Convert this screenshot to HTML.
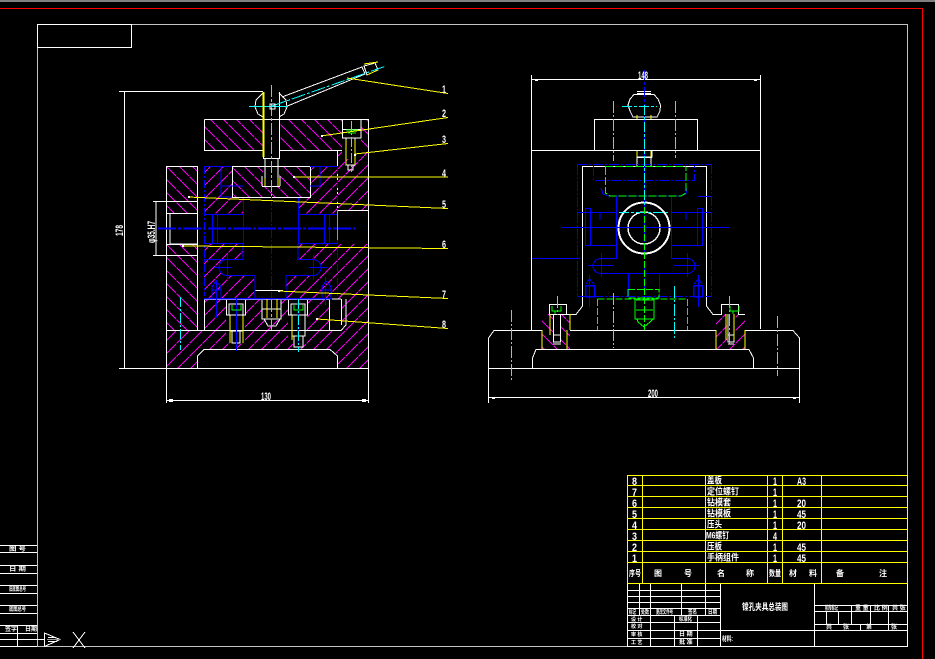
<!DOCTYPE html>
<html><head><meta charset="utf-8"><style>
html,body{margin:0;padding:0;background:#000;width:935px;height:659px;overflow:hidden}
svg{display:block}
text{fill:#fff;font-family:"Liberation Sans","Noto Sans CJK SC",sans-serif;font-size:11px;font-weight:700}
</style></head><body>
<svg width="935" height="659" viewBox="0 0 935 659" xmlns="http://www.w3.org/2000/svg">
<defs>
<pattern id="a" width="13" height="13" patternUnits="userSpaceOnUse"><path d="M-3-3L16 16" stroke="#f0f" stroke-width="1" stroke-dasharray="14 1" fill="none"/></pattern>
<pattern id="b" width="13" height="13" patternUnits="userSpaceOnUse"><path d="M-3 16L16-3" stroke="#f0f" stroke-width="1" stroke-dasharray="14 1" fill="none"/></pattern>
</defs>
<rect width="935" height="659" fill="#000"/>
<rect x="0" y="0" width="935" height="2" fill="#808080"/>
<g fill="none" shape-rendering="crispEdges">
<path d="M0 8.5H922.5V659" stroke="#f00" stroke-width="1.4"/>
<path d="M131 24.5H907.5V646.5H37.5V47" stroke="#c4c4c4"/>
<rect x="37.5" y="24.5" width="94" height="23" stroke="#fff"/>
<path d="M0 545.5H37M0 552.5H37M0 565.5H37M0 573.5H37M0 585.5H37M0 593.5H37M0 605.5H37M0 613.5H37M0 625.5H37M0 633.5H37M0 639.5H44M0 646.5H37M17.5 625V646" stroke="#fff"/>

<!-- LEFT VIEW hatches -->
<g stroke="none">
<path fill="url(#a)" d="M204 119H263V150H204Z"/>
<path fill="url(#a)" d="M279 119H368V150H279Z"/>
<path fill="url(#b)" d="M337 150H368V210H337Z"/>
<path fill="url(#a)" d="M232 166H310V197H232Z"/>
<path fill="url(#a)" d="M166 166H197V213H166Z"/>
<path fill="url(#b)" d="M204 166H232V197H243V214H204Z"/>
<path fill="url(#b)" d="M310 166H337V214H298V198L310 193Z"/>
<path fill="url(#a)" d="M166 244H197V330H166Z"/>
<path fill="url(#b)" d="M204 244H243V259H227A8 8 0 0 0 227 275H255V299H204Z"/>
<path fill="url(#b)" d="M298 244H368V330H341V299H286V275H313A8 8 0 0 0 313 259H298Z"/>
<path fill="url(#b)" d="M204 299H329V330H204Z"/>
<path fill="url(#b)" d="M166 330H368V368H337V355L330 349H204L197 355V368H166Z"/>
<path fill="url(#a)" d="M542 314H570V349H542Z"/>
<path fill="url(#b)" d="M716 314H745V349H716Z"/>
</g>
<rect x="263" y="92" width="16" height="66" fill="#000"/>
<rect x="226" y="299" width="19" height="44" fill="#000"/>
<rect x="288" y="299" width="19" height="44" fill="#000"/>
<rect x="262" y="299" width="19" height="21" fill="#000"/>
<rect x="342" y="119" width="19" height="40" fill="#000"/>
<rect x="263" y="158" width="16" height="28" fill="#000"/>
<rect x="553" y="314" width="8" height="30" fill="#000"/>
<rect x="727" y="314" width="8" height="30" fill="#000"/>

<!-- LEFT VIEW white -->
<g stroke="#fff">
<path d="M119 91.5H263M124.5 91V368M119 368.5H369M166.5 368V403M368.5 210V403M166 400.5H368"/>
<path d="M204.5 119.5H368.5V210M204.5 119.5V150.5H263M279 150.5H342M337.5 150V210M337 210.5H368"/>
<path d="M232.5 166.5H310.5V197.5H232.5ZM166.5 166.5H197.5V213.5H166.5ZM166.5 166V368M197.5 166V330M170 213V244H197M153 201.5H197M153 255.5H197M156 202V255"/>
<path d="M197 244.5H166M204 299.5H329.5V330.5M204.5 299V330M166 330.5H341L346 325V299M341.5 299V325M341 299H331"/>
<path d="M197.5 368V356L204 349.5H330L337.5 356V368"/>
<path d="M263.5 92V158.5H279.5V92M263 158.5H279M265 158V186M278 158V186M262 186.5H280M262 176V186M280 176V186"/>
<path d="M263 93L256 100L255 107L258 114L263 117M279 93L286 100L287 107L284 114L279 117"/>
<path d="M282 97L362 67L365 74L285 107M364 66L375 63L378 70L367 75Z"/>
<path d="M342.5 119.5V129.5H361V119.5M342.5 129V138H361V129M346 138V165H355V138M348 165V170H353V165"/>
<path d="M226.5 299.5V315H245.5V299.5H226.5M229 304H243V315H229ZM230 315V331H243V315M232 331V343H240V331"/>
<path d="M288.5 299.5V315H307.5V299.5H288.5M291 304H305V315H291ZM292 315V336H305V315M294 336V347H303V336"/>
<path d="M262 299V319H281V299M264 319L268 326H276L280 319M262 309H281"/>
<path d="M255 290.5H283"/>
</g>
<g stroke="#00f">
<path d="M158 228.5H356" stroke-dasharray="18 2 3 2" stroke-width="2"/>
<path d="M204.5 166V296" stroke-dasharray="8 2 2 2"/>
<path d="M337.5 166V296" stroke-dasharray="8 2 2 2"/>
<path d="M204 166.5H232M310 166.5H337M221 167V186H243M221 186V197H232M310 186H320V167M243.5 198V244M298.5 198V244"/>
<path d="M204 214.5H243M298 214.5H337M204 243.5H243M298 243.5H337M212.5 214V244M217.5 214V244M324.5 214V244M329.5 214V244"/>
<path d="M204 259.5H243V244M298 244V259.5H313A8 8 0 0 1 313 275.5H286V299M227 259.5A8 8 0 0 0 227 275.5H255V299M214 267.5H232M309 267.5H327M227.5 255V280M313.5 255V280"/>
<path d="M212 285V299M221 285V299M212 287L216 281L221 287M211 290H222M322 285V299M331 285V299M322 287L326 281L331 287M321 290H332M216.5 280V318M325.5 277V305"/>
<path d="M204 298.5H332" stroke-width="1.5"/>
<path d="M236.5 299V351M298 299V345"/>
<path d="M271.5 196V299" stroke-dasharray="10 2 2 2"/>
</g>
<g stroke="#0ff">
<path d="M271.5 85V196M271.5 300V330" stroke-dasharray="12 2 3 2"/>
<path d="M249 106.5H287"/>
<path d="M272 106L386 66" stroke-dasharray="14 2 3 2"/>
<path d="M180.5 297V350M298.5 299V352" stroke-dasharray="10 2 2 2"/>
<path d="M351.5 121V172" stroke-dasharray="10 2 2 2"/>
</g>
<rect x="270" y="104" width="5" height="5" stroke="#fff"/>
<g stroke="#0f0"><path d="M346 130H358M348 133H356M232 305V310H241V305M294 305V310H303V305M337.5 210V240" stroke-width="1"/></g>
<g stroke="#ff0">
<path d="M263.5 92V157" stroke-width="2"/>
<path d="M364 64L378 62M367 75L378 70"/>
<path d="M347 78L448 93.5M321 136L448 117.5M355 154L448 143.5M294 177H448M188 197L448 208.5M182 246L448 248.5M278 291L448 298.5M317 319L448 328.5"/>
<path d="M346 140V165M355 140V165M230 316V343M243 316V343M292 316V340M267 299V318M277 299V318"/>
<path d="M265 178V186M278 178V186"/>
</g>

<!-- RIGHT VIEW white -->
<g stroke="#fff">
<path d="M531.5 75V330M760.5 75V329M531 79.5H761M531 150.5H761"/>
<rect x="594.5" y="119.5" width="103" height="31"/>
<path d="M634 94.5L630 99L628 105L630 111L633 117H657L660 111L660.5 105L658 99L654 94.5ZM637 93.5H651M637 91.5H651"/>
<path d="M637 150V157H652V150M637 157.5H652M637 157V166M651 157V166"/>
<path d="M582.5 166.5H706.5V306L713 314.5H721.5V304.5H738.5V314.5H745M582.5 166V306L576 314.5H566M549.5 304.5H566.5V314.5H549.5Z"/>
<path d="M488.5 403V338L494 330.5H542M745 330.5H793L799.5 338V403M570 330.5H716"/>
<path d="M488 368.5H800M532.5 368V358L536 349.5H749L753.5 358V368M488 397.5H800"/>
<path d="M553.5 314V342H560.5V314M728 314V342H734V314M553 335H561M553 344H561M728 335H734M728 344H734"/>
<circle cx="644" cy="228" r="26"/><circle cx="644" cy="228" r="25"/><circle cx="644" cy="228" r="16" stroke-width="1.4"/>
</g>
<g stroke="#00f">
<path d="M577.5 165V297M711.5 164V297M577 164.5H711M577 296.5H711" stroke-dasharray="10 2 2 2"/>
<path d="M593.5 166V180.5H694.5V166" stroke-dasharray="10 2 2 2"/>
<path d="M601 188L603 194L608 196H680L686 194L687 188"/>
<path d="M616.5 196V258.5H601M671.5 196V258.5H687M577 212.5H616M672 212.5H711M600 212V220M686 212V220"/>
<rect x="585.5" y="208.5" width="5" height="37"/>
<rect x="697.5" y="208.5" width="5" height="37"/>
<path d="M591 245.5H616M672 245.5H697"/>
<path d="M561 227.5H729"/>
<path d="M532 258.5H580M698 196.5H711"/>
<path d="M601 258.5A8 7.5 0 0 0 601 273.5H687A8 7.5 0 0 0 687 258.5M628.5 273V297M659.5 273V297M588 265.5H614M601.5 253V277M674 265.5H700M687.5 253V277"/>
<rect x="585.5" y="285.5" width="9" height="11" stroke-width="1.5"/>
<rect x="693.5" y="285.5" width="9" height="11" stroke-width="1.5"/>
<path d="M586 284L589.5 279L594 284M694 284L698.5 279L702 284M589.5 275V307M698.5 275V307"/>
</g>
<path d="M644.5 70V118M644.5 118V164M644.5 164V294" stroke="#00f" stroke-dasharray="10 2 3 2" stroke-width="1"/>
<g stroke="#0ff">
<path d="M622 106.5H657M644.5 105V207M619 212.5H669" stroke-dasharray="10 2 3 2"/>
<path d="M613.5 101V161M675.5 101V158M613.5 293V348M674.5 286V340M511.5 310V382M777.5 316V376M557.5 296V315M729.5 296V345" stroke-dasharray="12 2 2 2"/>
</g>
<g stroke="#0f0">
<path d="M605.5 167V193L610 196H681L686 193V167M605 166.5H686" stroke-dasharray="8 2"/>
<path d="M644.5 207V330" stroke-dasharray="7 2" stroke-width="1"/>
<path d="M628 289.5H659V298H628ZM597.5 299H687.5V330M597.5 299V330" stroke-dasharray="7 2"/>
<path d="M635 298V319H654V298M637 319L638 322L644 327L650 322L653 319M636 310H653M636 300H654"/>
<path d="M552 306V311H561V306M730 306V311H739V306M555 311V314M733 311V314"/>
</g>
<g stroke="#ff0">
<path d="M637 115V119M651 115V119M637 151V157M651 151V157M542 330V349M570 314V330M567 330V349M716 330V349M745 330V349M734 314V340M726 314V340M550 314V335"/>
</g>

<!-- dimension end blobs -->
<g fill="#fff" stroke="none">
<rect x="169" y="399" width="4" height="3"/><rect x="362" y="399" width="4" height="3"/>
<rect x="535" y="80" width="3" height="1"/><rect x="754" y="80" width="3" height="1"/>
<rect x="492" y="398" width="3" height="1"/><rect x="793" y="398" width="3" height="1"/>
<rect x="321" y="135" width="2" height="2"/><rect x="293" y="176" width="2" height="2"/><rect x="188" y="196" width="2" height="2"/><rect x="182" y="245" width="2" height="2"/><rect x="278" y="290" width="2" height="2"/><rect x="316" y="318" width="2" height="2"/><rect x="354" y="154" width="2" height="2"/>
</g>

<!-- TITLE TABLE -->
<path stroke="#ff0" d="M627 475.5H907M627 485.5H907M627 496.5H907M627 507.5H907M627 518.5H907M627 529.5H907M627 540.5H907M627 551.5H907M627 562.5H907M627 583.5H907M627.5 475V584M642.5 475V584M705.5 475V584M767.5 475V584M782.5 475V584M821.5 475V584M907.5 475V584"/>
<g stroke="#fff">
<path d="M627.5 584V646M907.5 584V646M627 646.5H908M639.5 584V615M650.5 584V646M681.5 584V615M705.5 584V615M720.5 584V646M814.5 584V646M627 590.5H720M627 596.5H720M627 602.5H720M627 608.5H720M627 615.5H720M627 622.5H720M627 630.5H907M627 638.5H720M674.5 615V646M697.5 615V646M814 605.5H907M814 611.5H907M814 624.5H907M851.5 605V624M870.5 605V624M888.5 605V630M826.5 611V624M838.5 611V624M860.5 624V630"/>
</g>
<path d="M44.5 633V646.5L60 639.5ZM48 637.5H56M48 641.5H57" stroke="#fff"/>
<path d="M47 639.5H60" stroke="#999"/>
<path d="M73 632L85 648M85 632L73 648" stroke="#fff"/>
</g>

<!-- Dimension text -->
<text x="261" y="400" textLength="10" lengthAdjust="spacingAndGlyphs">130</text>
<text transform="translate(123,236) rotate(-90)" textLength="11" lengthAdjust="spacingAndGlyphs">178</text>
<text transform="translate(155,243) rotate(-90)" textLength="22" lengthAdjust="spacingAndGlyphs">φ35.H7</text>
<text x="638" y="79" textLength="10" lengthAdjust="spacingAndGlyphs">148</text>
<text x="648" y="397" textLength="10" lengthAdjust="spacingAndGlyphs">200</text>
<text x="442" y="93" textLength="4" lengthAdjust="spacingAndGlyphs">1</text>
<text x="442" y="117" textLength="4" lengthAdjust="spacingAndGlyphs">2</text>
<text x="442" y="143" textLength="4" lengthAdjust="spacingAndGlyphs">3</text>
<text x="442" y="177" textLength="4" lengthAdjust="spacingAndGlyphs">4</text>
<text x="442" y="208" textLength="4" lengthAdjust="spacingAndGlyphs">5</text>
<text x="442" y="248" textLength="4" lengthAdjust="spacingAndGlyphs">6</text>
<text x="442" y="298" textLength="4" lengthAdjust="spacingAndGlyphs">7</text>
<text x="442" y="328" textLength="4" lengthAdjust="spacingAndGlyphs">8</text>

<!-- Table text -->
<text x="632" y="485" textLength="5" lengthAdjust="spacingAndGlyphs">8</text>
<text x="632" y="496" textLength="5" lengthAdjust="spacingAndGlyphs">7</text>
<text x="632" y="507" textLength="5" lengthAdjust="spacingAndGlyphs">6</text>
<text x="632" y="518" textLength="5" lengthAdjust="spacingAndGlyphs">5</text>
<text x="632" y="529" textLength="5" lengthAdjust="spacingAndGlyphs">4</text>
<text x="632" y="540" textLength="5" lengthAdjust="spacingAndGlyphs">3</text>
<text x="632" y="551" textLength="5" lengthAdjust="spacingAndGlyphs">2</text>
<text x="632" y="562" textLength="5" lengthAdjust="spacingAndGlyphs">1</text>
<text x="773" y="485" textLength="4" lengthAdjust="spacingAndGlyphs">1</text>
<text x="773" y="496" textLength="4" lengthAdjust="spacingAndGlyphs">1</text>
<text x="773" y="507" textLength="4" lengthAdjust="spacingAndGlyphs">1</text>
<text x="773" y="518" textLength="4" lengthAdjust="spacingAndGlyphs">1</text>
<text x="773" y="529" textLength="4" lengthAdjust="spacingAndGlyphs">1</text>
<text x="773" y="540" textLength="4" lengthAdjust="spacingAndGlyphs">4</text>
<text x="773" y="551" textLength="4" lengthAdjust="spacingAndGlyphs">1</text>
<text x="773" y="562" textLength="4" lengthAdjust="spacingAndGlyphs">1</text>
<text x="797" y="485" textLength="9" lengthAdjust="spacingAndGlyphs">A3</text>
<text x="797" y="507" textLength="9" lengthAdjust="spacingAndGlyphs">20</text>
<text x="797" y="518" textLength="9" lengthAdjust="spacingAndGlyphs">45</text>
<text x="797" y="529" textLength="9" lengthAdjust="spacingAndGlyphs">20</text>
<text x="797" y="551" textLength="9" lengthAdjust="spacingAndGlyphs">45</text>
<text x="797" y="562" textLength="9" lengthAdjust="spacingAndGlyphs">45</text>
<g style="font-size:9px">
<text style="font-size:9px" x="707" y="483.5" textLength="15" lengthAdjust="spacingAndGlyphs">盖板</text>
<text style="font-size:9px" x="707" y="494.5" textLength="32" lengthAdjust="spacingAndGlyphs">定位螺钉</text>
<text style="font-size:9px" x="707" y="505.5" textLength="24" lengthAdjust="spacingAndGlyphs">钻模套</text>
<text style="font-size:9px" x="707" y="516.5" textLength="24" lengthAdjust="spacingAndGlyphs">钻模板</text>
<text style="font-size:9px" x="707" y="527.5" textLength="15" lengthAdjust="spacingAndGlyphs">压头</text>
<text style="font-size:9px" x="706" y="538.5" textLength="23" lengthAdjust="spacingAndGlyphs">M6螺钉</text>
<text style="font-size:9px" x="707" y="549.5" textLength="15" lengthAdjust="spacingAndGlyphs">压板</text>
<text style="font-size:9px" x="707" y="560.5" textLength="32" lengthAdjust="spacingAndGlyphs">手柄组件</text>
<text style="font-size:8px" x="629" y="576" textLength="12" lengthAdjust="spacingAndGlyphs">序号</text>
<text style="font-size:8px" x="654" y="576">图</text>
<text style="font-size:8px" x="684" y="576">号</text>
<text style="font-size:8px" x="717" y="576">名</text>
<text style="font-size:8px" x="746" y="576">称</text>
<text style="font-size:8px" x="769" y="576" textLength="12" lengthAdjust="spacingAndGlyphs">数量</text>
<text style="font-size:8px" x="789" y="576">材</text>
<text style="font-size:8px" x="809" y="576">料</text>
<text style="font-size:8px" x="836" y="576">备</text>
<text style="font-size:8px" x="879" y="576">注</text>
<text style="font-size:9px" x="742" y="610" textLength="46" lengthAdjust="spacingAndGlyphs">镗孔夹具总装图</text>
<text style="font-size:7px" x="722" y="641" textLength="11" lengthAdjust="spacingAndGlyphs">材料:</text>
</g>
<text style="font-size:6px" x="629" y="614" textLength="7" lengthAdjust="spacingAndGlyphs">标记</text>
<text style="font-size:6px" x="641" y="614" textLength="8" lengthAdjust="spacingAndGlyphs">处数</text>
<text style="font-size:6px" x="656" y="614" textLength="17" lengthAdjust="spacingAndGlyphs">更改文件号</text>
<text style="font-size:6px" x="688" y="614" textLength="9" lengthAdjust="spacingAndGlyphs">签名</text>
<text style="font-size:6px" x="708" y="614" textLength="9" lengthAdjust="spacingAndGlyphs">日期</text>
<text style="font-size:5px" x="631" y="621">设 计</text>
<text style="font-size:5px" x="631" y="628">校 对</text>
<text style="font-size:5px" x="631" y="636">审 核</text>
<text style="font-size:5px" x="631" y="644">工 艺</text>
<text style="font-size:6px" x="679" y="621" textLength="13" lengthAdjust="spacingAndGlyphs">标准化</text>
<text style="font-size:6px" x="679" y="636">日 期</text>
<text style="font-size:6px" x="679" y="644">批 准</text>
<text style="font-size:6px" x="825" y="610" textLength="13" lengthAdjust="spacingAndGlyphs">阶段标记</text>
<text style="font-size:6px" x="855" y="610">重 量</text>
<text style="font-size:6px" x="874" y="610">比 例</text>
<text style="font-size:6px" x="892" y="610">共 张</text>
<text style="font-size:6px" x="826" y="629">共</text>
<text style="font-size:6px" x="843" y="629">张</text>
<text style="font-size:6px" x="866" y="629">第</text>
<text style="font-size:6px" x="891" y="629">张</text>
<text style="font-size:6px" x="9" y="551" textLength="17" lengthAdjust="spacingAndGlyphs">图 号</text>
<text style="font-size:6px" x="9" y="571" textLength="17" lengthAdjust="spacingAndGlyphs">日 期</text>
<text style="font-size:6px" x="9" y="591" textLength="17" lengthAdjust="spacingAndGlyphs">旧底图总号</text>
<text style="font-size:6px" x="9" y="611" textLength="17" lengthAdjust="spacingAndGlyphs">底图总号</text>
<text style="font-size:6px" x="5" y="631">签字</text>
<text style="font-size:6px" x="25" y="631">日期</text>
</svg>
</body></html>
